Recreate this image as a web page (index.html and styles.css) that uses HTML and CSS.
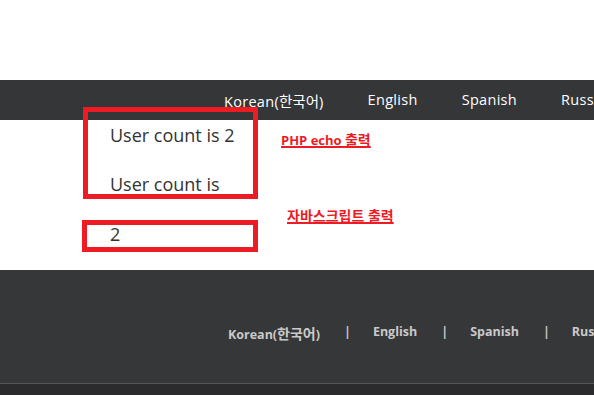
FILE: index.html
```html
<!DOCTYPE html>
<html lang="ko">
<head>
<meta charset="utf-8">
<title>User count</title>
<link rel="stylesheet" href="styles.css">
</head>
<body>
<header class="top"></header>
<nav class="nav">
  <ul class="nav-list">
    <li><a href="#">Korean(<span class="ko">한국어</span>)</a></li>
    <li><a href="#">English</a></li>
    <li><a href="#">Spanish</a></li>
    <li><a href="#">Russian</a></li>
  </ul>
</nav>
<main class="content">
  <p class="line l1">User count is 2</p>
  <p class="line l2">User count is</p>
  <p class="line l3">2</p>
  <div class="box box1"></div>
  <div class="box box2"></div>
  <span class="note note1">PHP echo <span class="ko">출력</span></span>
  <span class="note note2">자바스크립트 출력</span>
</main>
<footer class="footer">
  <ul class="foot-list">
    <li><a href="#">Korean(<span class="ko">한국어</span>)</a></li>
    <li class="sep">|</li>
    <li><a href="#">English</a></li>
    <li class="sep">|</li>
    <li><a href="#">Spanish</a></li>
    <li class="sep">|</li>
    <li><a href="#">Russian</a></li>
  </ul>
</footer>
<div class="bottom"></div>
</body>
</html>
```
FILE: styles.css
```css
html, body {
  margin: 0;
  padding: 0;
  overflow: hidden;
  background: #fff;
}
body {
  font-family: "Open Sans", "Noto Sans CJK KR", sans-serif;
  width: 594px;
}
ul { list-style: none; margin: 0; padding: 0; }
a { text-decoration: none; color: inherit; }

.top { height: 80px; }

.nav {
  height: 40px;
  background: #353638;
  display: flex;
  align-items: center;
  overflow: hidden;
}
.nav-list {
  display: flex;
  padding-left: 224px;
  white-space: nowrap;
  font-size: 14.5px;
  font-weight: 500;
  letter-spacing: 0.3px;
  color: #fff;
  gap: 44px;
}
.nav-list .ko {
  font-weight: 400;
  letter-spacing: 0;
}

.content {
  position: relative;
  height: 150px;
  padding: 0 0 0 110px;
  color: #333;
}
.line {
  margin: 0;
  font-size: 18px;
  line-height: 25px;
}
.l1 { padding-top: 3px; }
.l2 { margin-top: 24px; }
.l3 { margin-top: 25px; }

.box {
  position: absolute;
  z-index: 2;
  border: 5px solid #ed1c24;
  box-sizing: border-box;
}
.box1 { left: 83px; top: -13px; width: 175px; height: 92px; }
.box2 { left: 82px; top: 100px; width: 176px; height: 32px; }

.note {
  position: absolute;
  font-size: 13px;
  font-weight: 700;
  color: #ed1c24;
  text-decoration: underline;
  text-decoration-thickness: 2px;
  white-space: nowrap;
  line-height: 16px;
}
.note1 { left: 281px; top: 12px; }
.note1 .ko { font-size: 14px; }
.note2 { left: 287px; top: 88px; font-size: 14px; }

.footer {
  height: 113px;
  background: #363739;
  border-bottom: 1px solid #555658;
  display: flex;
  align-items: center;
  overflow: hidden;
}
.foot-list {
  display: flex;
  padding-left: 228px;
  white-space: nowrap;
  font-size: 12.5px;
  font-weight: 700;
  color: #c9c9c9;
  gap: 24px;
  margin-top: 12px;
}
.foot-list .sep { margin-right: -2px; }
.foot-list .ko {
  font-size: 14px;
}
.bottom {
  height: 11px;
  background: #2b2b2d;
}
```
